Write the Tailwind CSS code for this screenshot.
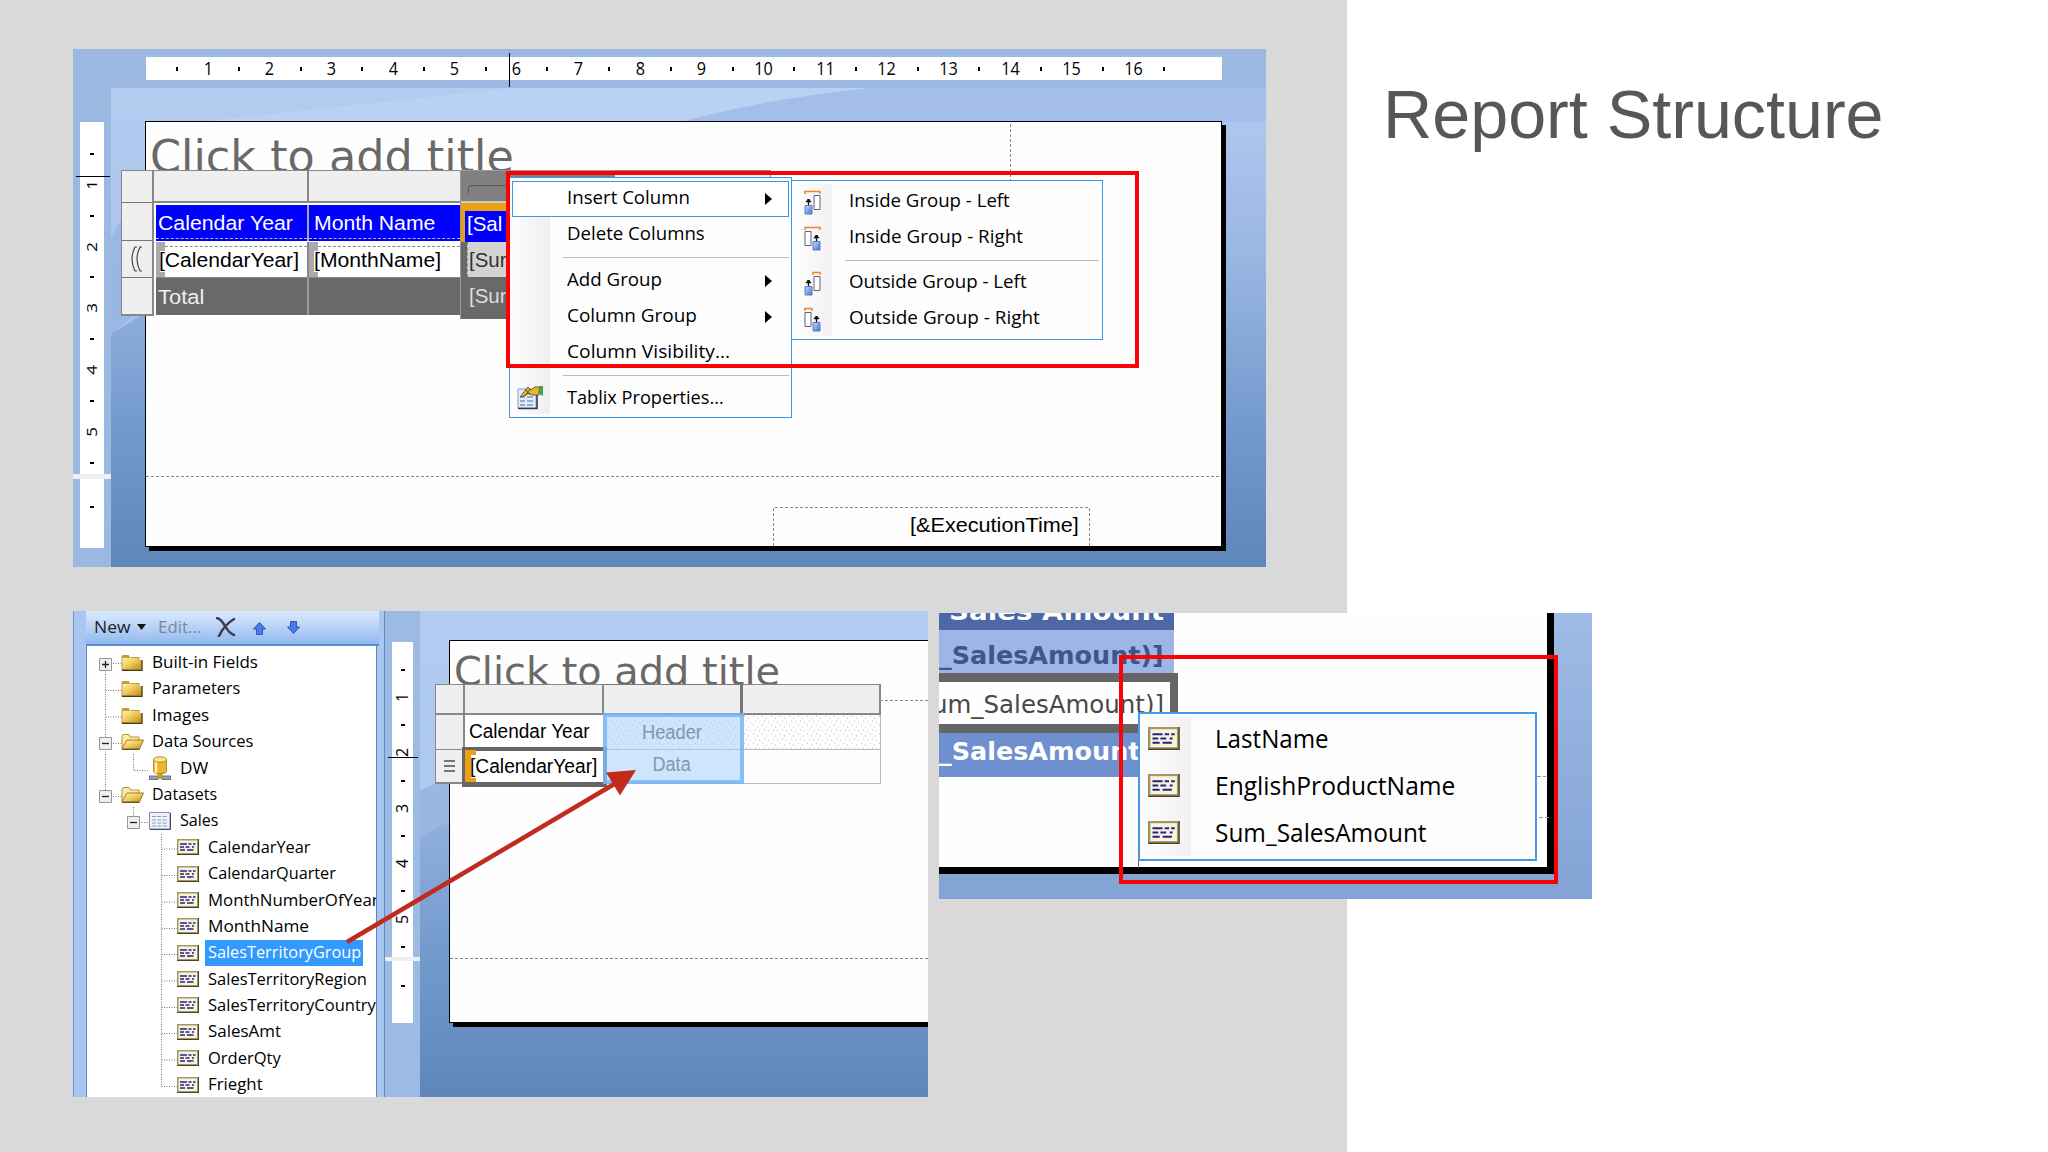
<!DOCTYPE html>
<html lang="en">
<head>
<meta charset="utf-8">
<title>Report Structure</title>
<script src="https://cdn.jsdelivr.net/npm/@tailwindcss/browser@4"></script>
</head>
<body class="relative w-[2048px] h-[1152px] overflow-hidden bg-white font-['Open_Sans','Noto_Sans',sans-serif] text-black">
<!-- shared symbols -->
<svg class="absolute w-0 h-0">
  <defs>
    <linearGradient id="gold" x1="0" y1="0" x2="1" y2="1"><stop offset="0" stop-color="#fff6c4"/><stop offset=".5" stop-color="#f0cc5c"/><stop offset="1" stop-color="#c08e1c"/></linearGradient>
    <linearGradient id="blu" x1="0" y1="0" x2="1" y2="1"><stop offset="0" stop-color="#c5d9fa"/><stop offset="1" stop-color="#4a72c8"/></linearGradient>
    <linearGradient id="sky" x1="0" y1="0" x2="0" y2="1"><stop offset="0" stop-color="#b2cbf0"/><stop offset=".35" stop-color="#9ab6e3"/><stop offset=".72" stop-color="#7199cb"/><stop offset="1" stop-color="#5f86b9"/></linearGradient>
    <symbol id="closed" viewBox="0 0 22 17"><path d="M.5 16V3l1-2h6l1.500 2H18.500V6H21v10.500H.5Z" fill="#c49a3a"/><path d="M1.500 15V4h6.500l1.500-1.500h0l.5 1.500h7.500V6H20v9Z" fill="url(#gold)"/><path d="M21 6v10.500H1" fill="none" stroke="#4a3c10" stroke-width="1.300"/></symbol>
    <symbol id="open" viewBox="0 0 23 17"><path d="M1 15V3l1-1.500h6L9.500 4H18v3" fill="#fbe9a6" stroke="#b89238"/><path d="M1 15.500 6 7h16.500l-4 9H1Z" fill="url(#gold)" stroke="#a67d22"/><path d="M1 16.300h17.500" stroke="#4a3c10"/></symbol>
    <symbol id="field" viewBox="0 0 22 16"><path d="M0 0h22v16H0z" fill="#4a4424"/><path d="M0 0h21v15H0z" fill="#a09868"/><path d="M1.500 1.500h18.500v12.500H1.500z" fill="#f8f4dc"/><path d="M3 5h7M11.500 5h3M16 5h2.500M3 8h4M8.500 8h4M15 8h2M3 11h5M10 11h6.500" stroke="#22208c" stroke-width="1.400"/></symbol>
    <symbol id="plus" viewBox="0 0 13 13"><path d="M.5.5h12v12H.5z" fill="#efefef" stroke="#969696"/><path d="M3 6.500h7M6.500 3v7" stroke="#222" stroke-width="1.300"/></symbol>
    <symbol id="minus" viewBox="0 0 13 13"><path d="M.5.5h12v12H.5z" fill="#efefef" stroke="#969696"/><path d="M3 6.500h7" stroke="#222" stroke-width="1.300"/></symbol>
    <symbol id="db" viewBox="0 0 22 24"><path d="M0 20h9v3.500H0zM13 20h9v3.500h-9z" fill="#8fa6ba" stroke="#4c5c6a" stroke-width=".8"/><path d="M8.500 17h5v6h-5z" fill="#c89c2a"/><path d="M4.500 3.500v12c0 3 13 3 13 0v-12Z" fill="#e8b730" stroke="#a87c14" stroke-width=".8"/><path d="M7 5v12" stroke="#fff0a0" stroke-width="2.500"/><ellipse cx="11" cy="3.500" rx="6.500" ry="2.800" fill="#fbe48a" stroke="#a87c14" stroke-width=".8"/></symbol>
    <symbol id="grid" viewBox="0 0 22 18"><path d="M.5.5h20.500v16.500H.5z" fill="#eef4fd" stroke="#7e8fae"/><path d="M21.500 1v16.500H1" fill="none" stroke="#3b4a68"/><path d="M3 4.500h16M3 8h16M3 11h16M3 14h16" stroke="#8c9ab6" stroke-dasharray="4 1.300"/></symbol>
    <symbol id="colL" viewBox="0 0 17 25"><path d="M10 5.500h6v14h-6z" fill="#fff" stroke="#59637a"/><path d="M4.500 17V9M1.800 11.500h5.400M3 10h3" stroke="#111" stroke-width="1.300"/><path d="M1 15.500h7v8.500H1z" fill="url(#blu)" stroke="#5f7fc0"/></symbol>
    <symbol id="colR" viewBox="0 0 17 25"><path d="M1 5.500h6v14H1z" fill="#fff" stroke="#59637a"/><path d="M12.500 17V9M9.800 11.500h5.400M11 10h3" stroke="#111" stroke-width="1.300"/><path d="M9 15.500h7v8.500H9z" fill="url(#blu)" stroke="#5f7fc0"/></symbol>
    <pattern id="dots" width="9" height="9" patternUnits="userSpaceOnUse"><path d="M1 1h1M5 3h1M3 6h1M7 7h1" stroke="#b9b4c2"/></pattern>
  </defs>
</svg>

<main class="flex w-full h-full">
  <section class="w-[1347px] h-full bg-[#d9d9d9]"></section>
  <section class="flex-1 pt-[76px] pl-[36px]">
    <h1 class="text-[68.500px] leading-[78px] text-[#575757] font-['Liberation_Sans',sans-serif]"><span data-w="501" class="inline-block origin-left whitespace-nowrap">Report Structure</span></h1>
  </section>
</main>

<!-- report designer with column context menu -->
<section class="absolute left-[73px] top-[49px] w-[1193px] h-[518px] overflow-hidden bg-[#9bb8e1]">
  <svg class="absolute left-[38px] top-[39px]" width="1155" height="479" viewBox="0 0 1155 479">
    <path d="M0 0h1155v479H0z" fill="url(#sky)"/>
    <path d="M0 0h760Q660 10 570 34H0Z" fill="#b9d1f2"/>
    <path d="M0 0h400L34 40V225L0 246Z" fill="#b0c9ef" opacity=".75"/>
    <path d="M0 150Q20 110 36 100V216L0 246Z" fill="#8fafe0" opacity=".6"/>
    <path d="M760 0h395v34H570Q660 10 760 0Z" fill="#a3bee8"/>
  </svg>
  <div data-ruler="h" class="absolute left-[73px] top-[8px] w-[1076px] h-[23px] pl-[15.900px] flex items-center bg-white"></div>
  <div data-ruler="v1" class="absolute left-[7px] top-[73px] w-[24px] h-[426px] pt-[16.600px] flex flex-col items-center bg-white"></div>
  <div class="absolute left-0 top-[425px] w-[38px] h-[5px] bg-[#efefef]"></div>
  <div class="absolute left-[436px] top-[4px] w-px h-[34px] bg-black"></div>
  <div class="absolute left-[3px] top-[127px] w-[34px] h-px bg-black"></div>

  <div class="absolute left-[72px] top-[72px] w-[1077px] h-[426px] border border-black bg-[#fefefe] shadow-[4px_4px_0_#000]">
    <div class="pl-[4px] pt-[8px] text-[44px] leading-[54px] text-[#696969] font-['DejaVu_Sans',sans-serif]"><span data-w="364" class="inline-block origin-left whitespace-nowrap">Click to add title</span></div>
    <svg class="absolute left-0 top-0" width="1075" height="424"><path d="M864.500 2v60M0 354.500h1075" stroke="#888" stroke-dasharray="3 2"/><path d="M627.500 424v-38.500h316V424" fill="none" stroke="#888" stroke-dasharray="3 2"/></svg>
    <div class="absolute left-[628px] top-[386px] w-[315px] h-[36px] flex items-center justify-end pr-[10px] pb-[2px] text-[21px] font-['Liberation_Sans',sans-serif]"><span data-w="169" class="inline-block origin-right whitespace-nowrap">[&amp;ExecutionTime]</span></div>
  </div>

  <!-- tablix -->
  <div class="absolute left-[48px] top-[121px] flex font-['Liberation_Sans',sans-serif] text-[20.500px] leading-[24px]">
    <div class="w-[33px] h-[146px] bg-[#f0efef] border border-[#888] grid grid-rows-[32px_38px_37px_1fr] divide-y divide-[#777] border-r-2 border-b-2">
      <div></div><div></div>
      <div class="flex items-center justify-center"><svg width="12" height="28" viewBox="0 0 12 28" fill="none" stroke="#444" stroke-width="1.200"><path d="M6 2H4Q1 8 1 14t3 12h2M11 2H9Q6 8 6 14t3 12h2"/></svg></div>
      <div></div>
    </div>
    <div class="w-[306px] h-[146px] bg-white grid grid-cols-[155px_151px] grid-rows-[33px_38px_37px_37px]">
      <div class="bg-[#f0efef] border-t border-b-2 border-r-2 border-[#888]"></div>
      <div class="bg-[#f0efef] border-t border-b-2 border-[#888]"></div>
      <div class="ml-[2px] mt-[2px] pl-[2px] flex items-center bg-[#00f] text-white border-r-2 border-[#aaa] relative"><span data-w="135" class="inline-block origin-left whitespace-nowrap">Calendar Year</span><i class="absolute left-0 right-0 bottom-[2px] border-b border-dashed border-[#bbb]"></i></div>
      <div class="mt-[2px] pl-[5px] flex items-center bg-[#00f] text-white relative"><span data-w="121" class="inline-block origin-left whitespace-nowrap">Month Name</span><i class="absolute left-0 right-0 bottom-[2px] border-b border-dashed border-[#bbb]"></i></div>
      <div class="ml-[2px] mt-px pl-[3px] flex items-center border-r-2 border-b border-[#888] relative bg-white"><i class="absolute left-0 top-0 bottom-0 w-[9px] bg-[#aaa]"></i><i class="absolute left-[4px] top-[9px] bottom-[5px] w-[5px] bg-white"></i><span data-w="140" class="relative inline-block origin-left whitespace-nowrap">[CalendarYear]</span><i class="absolute left-[9px] right-0 top-[4px] border-b border-dashed border-[#888]"></i></div>
      <div class="mt-px pl-[5px] flex items-center border-b border-[#888] relative bg-white"><i class="absolute left-0 top-0 bottom-0 w-[9px] bg-[#aaa]"></i><i class="absolute left-[5px] top-[9px] bottom-[5px] w-[5px] bg-white"></i><span data-w="127" class="relative inline-block origin-left whitespace-nowrap">[MonthName]</span><i class="absolute left-[9px] right-0 top-[4px] border-b border-dashed border-[#888]"></i></div>
      <div class="ml-[2px] pl-[2px] flex items-center bg-[#696969] text-[#eee] border-r-2 border-[#999]"><span data-w="46" class="inline-block origin-left whitespace-nowrap">Total</span></div>
      <div class="bg-[#696969]"></div>
    </div>
    <div class="w-[155px] h-[149px] bg-[#696969] border-l border-t border-[#999] relative">
      <div class="h-[32px] bg-[#808080] border-b-2 border-[#ccc] pt-[14px] pl-[7px]"><div class="h-[8px] border-t border-l border-[#555] rounded-tl-[4px]"></div></div>
      <div class="h-[39px] bg-[#00f] border-t-8 border-l-4 border-[#eaa010] pl-[2px] pb-[6px] text-white flex items-center"><span class="whitespace-nowrap">[Sal</span></div>
      <div class="ml-[6px] h-[35px] bg-[#d3d3d3] pl-px text-[#333] flex items-center border-l border-dashed border-[#888]"><span class="whitespace-nowrap">[Sur</span></div>
      <div class="h-[37px] pl-[8px] text-[#ddd] flex items-center"><span class="whitespace-nowrap">[Sur</span></div>
    </div>
    <div class="w-[156px] h-[8px] border-t border-r border-[#888] bg-[#f0efef]"></div>
  </div>

  <!-- context menu -->
  <div class="absolute left-[436px] top-[128px] w-[283px] h-[241px] border border-[#3b97ec] bg-[#fdfdfe] p-[2px] pt-[3px] text-[18.500px]">
    <div class="absolute left-[2px] top-[38px] bottom-[3px] w-[38px] bg-linear-to-r from-[#fdfdfe] to-[#efeff1]"></div>
    <div data-menu="1" class="relative"></div>
    <svg class="absolute left-[6px] top-[207px]" width="28" height="26" viewBox="0 0 28 26"><path d="M2 4h18v19H2z" fill="#e3ecfb" stroke="#8aa0c8"/><path d="M2 23.500h19V5" fill="none" stroke="#2c3d5c" stroke-width="1.600"/><path d="M4 12h5M4 16h5M4 20h5M11 12h6M11 16h6M11 20h6" stroke="#7f95bd" stroke-width="1.500"/><path d="M4 12 12 2l3 3 4-3h5l2 3-3 5h-7l-3-2-5 3Z" fill="#e4b92e" stroke="#6c5a20"/><path d="M23 1h4v10l-5-3Z" fill="#4da04a"/><path d="m9 4 5 6M14 4l-5 7" stroke="#5f5420"/></svg>
  </div>
  <div class="absolute left-[718px] top-[131px] w-[312px] h-[160px] border border-[#3b97ec] bg-[#fdfdfe] p-[3px] text-[18.500px]">
    <div class="absolute left-[2px] top-[3px] bottom-[3px] w-[38px] bg-linear-to-r from-[#fdfdfe] to-[#f2f2f4]"></div>
    <div data-menu="2" class="relative"></div>
  </div>
  <div class="absolute left-[433px] top-[122px] w-[633px] h-[197px] border-4 border-[#fb0207]"></div>
</section>

<!-- report data pane and designer -->
<section class="absolute left-[73px] top-[611px] w-[855px] h-[486px] overflow-hidden flex bg-[#9bbbe5]">
  <div class="w-[312px] h-full flex border-l border-[#6d96d2] bg-[#a9c6f3] pl-[12px] pr-[5px] border-r border-r-[#5f8bc9]">
    <div class="w-[293px] h-full flex flex-col">
      <div class="h-[35px] shrink-0 border-b-2 border-[#5c8dd8] bg-linear-to-b from-[#dcebfd] to-[#92b8ef] flex items-center pl-[8px] pb-px text-[16.500px] text-[#222] relative">
        <span class="w-[43px] whitespace-nowrap"><span data-w="36" class="inline-block origin-left">New</span></span>
        <svg width="9" height="6"><path d="M0 0h9L4.500 6Z" fill="#111"/></svg>
        <span class="ml-[12px] w-[58px] whitespace-nowrap text-[#7c8799]"><span data-w="43" class="inline-block origin-left">Edit...</span></span>
        <svg width="20" height="20" viewBox="0 0 20 20"><path d="M1 1q4 1 8 8t9 9M18 2Q8 8 3 19" fill="none" stroke="#3b3f4a" stroke-width="2.500" stroke-linecap="round"/></svg>
        <svg class="ml-[17px] mt-[2px]" width="13" height="13"><path d="M6.500.5 12.500 7h-3v5.500h-6V7h-3Z" fill="#4a7be8" stroke="#3157b4"/></svg>
        <svg class="ml-[21px] mt-[1px]" width="13" height="13"><path d="M6.500 12.500 12.500 6h-3V.5h-6V6h-3Z" fill="#4a7be8" stroke="#3157b4"/></svg>
      </div>
      <div class="flex-1 mr-[2px] bg-white border-x border-[#5c86c4] relative overflow-hidden pt-[3.200px]">
        <svg class="absolute left-0 top-0" width="100" height="450" fill="none" stroke="#777" stroke-dasharray="1 1.500"><path d="M18.500 18v133M18.500 17.500h16M18.500 44.500h16M18.500 71h16M18.500 97.500h16M18.500 150.500h16M46.500 108v16.500h16M46.500 161v16M47 176.500h16M74.500 188v253M74.500 203h16M74.500 229.500h16M74.500 256h16M74.500 282.500h16M74.500 308.500h16M74.500 335h16M74.500 361.500h16M74.500 387.500h16M74.500 414h16M74.500 440.500h16"/></svg>
        <div data-tree class="relative text-[16.500px]"></div>
      </div>
    </div>
  </div>
  <div class="w-[35px] h-full relative">
    <div data-ruler="v2" class="absolute left-[7px] top-[31px] w-[21px] h-[381px] pt-[14px] flex flex-col items-center bg-white"></div>
    <div class="absolute left-0 top-[346px] w-[35px] h-[4px] bg-[#efefef]"></div>
    <div class="absolute left-[3px] top-[146px] w-[30px] h-px bg-black"></div>
  </div>
  <div class="flex-1 h-full relative overflow-hidden">
    <svg class="absolute left-0 top-0" width="508" height="486"><path d="M0 0h508v486H0z" fill="url(#sky)"/><path d="M0 0h508v30H29v140L0 190Z" fill="#b3cdf1" opacity=".8"/><path d="M0 180 30 165V210L0 226Z" fill="#9ab6e2"/></svg>
    <div class="absolute left-[29px] top-[29px] w-[520px] h-[383px] border border-black bg-[#fefefe] shadow-[4px_4px_0_#000]">
      <div class="pl-[4px] pt-[6px] text-[39.500px] leading-[48px] text-[#696969] font-['DejaVu_Sans',sans-serif]"><span data-w="326" class="inline-block origin-left whitespace-nowrap">Click to add title</span></div>
      <svg class="absolute left-0 top-0" width="518" height="381"><path d="M430 59.500h88M0 317.500h518" stroke="#888" stroke-dasharray="3 2"/></svg>
    </div>
    <div class="absolute left-[15px] top-[73px] w-[446px] h-[100px] grid grid-cols-[30px_139px_139px_138px] grid-rows-[31px_35px_34px] font-['Liberation_Sans',sans-serif] text-[19.500px] leading-[24px]">
      <div class="bg-[#f0efef] border border-r-2 border-b-2 border-[#888]"></div>
      <div class="bg-[#f0efef] border-t border-b-2 border-r-2 border-[#888]"></div>
      <div class="bg-[#f0efef] border-t border-b-2 border-r-3 border-[#777]"></div>
      <div class="bg-[#f0efef] border-t border-b-2 border-r-2 border-[#888]"></div>
      <div class="bg-[#f0efef] border-l border-r-2 border-b border-[#888]"></div>
      <div class="bg-white flex items-center pl-[4px] pb-[4px] pt-px"><span data-w="121" class="inline-block origin-left whitespace-nowrap">Calendar Year</span></div>
      <div class="border-b border-[#bbb]"><svg class="w-full h-full"><rect width="100%" height="100%" fill="url(#dots)"/></svg></div>
      <div class="border-b border-r border-[#bbb]"><svg class="w-full h-full"><rect width="100%" height="100%" fill="url(#dots)"/></svg></div>
      <div class="bg-[#f0efef] border-l border-r-2 border-b-2 border-[#888] flex items-center justify-center"><i class="w-[11px] h-[12px] border-y-2 border-[#777] flex flex-col justify-center"><b class="h-[2px] bg-[#777]"></b></i></div>
      <div></div>
      <div class="border-b border-[#bbb]"></div>
      <div class="border-b border-r border-[#bbb]"></div>
    </div>
    <div class="absolute left-[42px] top-[136px] w-[145px] h-[40px] border-4 border-b-5 border-[#666] bg-white flex items-center pl-[4px] font-['Liberation_Sans',sans-serif] text-[19.500px] leading-[24px] pb-px">
      <i class="absolute left-[-1px] top-[-1px] bottom-0 w-[11px] bg-[#eaa010]"></i><i class="absolute left-[5px] top-[4px] bottom-[4px] w-[5px] bg-white"></i>
      <span data-w="127" class="relative inline-block origin-left whitespace-nowrap">[CalendarYear]</span>
    </div>
    <div class="absolute left-[183px] top-[102px] w-[141px] h-[71px] border-4 border-[#6fb0f5]/75 bg-[#a5cffd]/55 grid grid-rows-[31px_32px] justify-items-center items-center font-['Liberation_Sans',sans-serif] text-[19.500px] leading-[24px] text-[#8795aa] pr-[4px]">
      <span data-w="60" class="inline-block whitespace-nowrap pb-[2px]">Header</span>
      <span data-w="38" class="inline-block whitespace-nowrap">Data</span>
    </div>
  </div>
  <svg class="absolute left-0 top-0" width="855" height="486"><path d="M274 331 543 172" stroke="#c02b1f" stroke-width="4.500"/><path d="M563 159 533 161.500 547 184.500Z" fill="#c42a1c"/></svg>
</section>

<!-- field picker -->
<section class="absolute left-[939px] top-[613px] w-[653px] h-[286px] overflow-hidden bg-linear-to-b from-[#9fbbe7] to-[#82a3d3]">
  <div class="w-[615px] h-[261px] bg-[#fefefe] border-r-[7px] border-b-[7px] border-black font-['DejaVu_Sans',sans-serif] text-[25px] leading-[30px]">
    <div class="w-[235px] h-[18px] bg-[#4c68a7] border-b border-[#9fb5dc] text-white font-bold overflow-hidden flex items-end pl-[10px] pb-[3px]"><span data-w="215" class="inline-block origin-left whitespace-nowrap">Sales Amount</span></div>
    <div class="w-[235px] h-[42px] bg-[#9db6e5] text-[#3f568c] font-bold flex items-center pt-[8px]"><span data-w="225" class="inline-block origin-left whitespace-nowrap">_SalesAmount)]</span></div>
    <div class="w-[239px] h-[60px] bg-[#fefefe] border-t-[9px] border-b-[9px] border-r-[8px] border-[#666] text-[#484848] flex items-center overflow-hidden pt-[3px]"><span data-w="232" class="ml-[-7px] inline-block origin-left whitespace-nowrap">um_SalesAmount)]</span></div>
    <div class="w-[235px] h-[44px] bg-[#6f90ce] text-white font-bold flex items-center pb-[6px]"><span data-w="225" class="inline-block origin-left whitespace-nowrap">_SalesAmount)]</span></div>
  </div>
  <svg class="absolute left-0 top-0" width="653" height="286"><path d="M598 163.500h9M600 204.500h12" stroke="#999" stroke-dasharray="4 2"/><path d="M199.500 247v8" stroke="#666"/></svg>
  <div class="absolute left-[199px] top-[99px] w-[399px] h-[149px] border-2 border-[#4798e6] bg-[#fdfdfe] text-[25px] flex flex-col pt-[1px]">
    <div class="absolute left-px top-[3px] bottom-[3px] w-[50px] bg-linear-to-r from-[#fdfdfe] to-[#f1f1f3]"></div>
    <div class="relative h-[47px] flex items-center pl-[8px]"><svg class="w-[32px] h-[23px]"><use href="#field"/></svg><span data-w="114" class="ml-[35px] inline-block origin-left whitespace-nowrap">LastName</span></div>
    <div class="relative h-[47px] flex items-center pl-[8px]"><svg class="w-[32px] h-[23px]"><use href="#field"/></svg><span data-w="240" class="ml-[35px] inline-block origin-left whitespace-nowrap">EnglishProductName</span></div>
    <div class="relative h-[47px] flex items-center pl-[8px]"><svg class="w-[32px] h-[23px]"><use href="#field"/></svg><span data-w="212" class="ml-[35px] inline-block origin-left whitespace-nowrap">Sum_SalesAmount</span></div>
  </div>
</section>
<div class="absolute left-[1119px] top-[655px] w-[439px] h-[229px] border-4 border-[#fb0207]"></div>

<script>
const $ = s => document.querySelector(s);
const dot = '<i class="w-[2px] h-[4px] bg-black"></i>';
// rulers: a tick dot, then a number, repeated
let h = '';
for (let n = 1; n <= 16; n++) h += `<div class="w-[30.850px] shrink-0 flex justify-center">${dot}</div><div class="w-[30.850px] shrink-0 text-center text-[18px] leading-[23px] scale-x-90">${n}</div>`;
$('[data-ruler=h]').innerHTML = h + `<div class="w-[30.850px] shrink-0 flex justify-center">${dot}</div>`;
const vdot = '<i class="w-[4px] h-[2px] bg-black"></i>';
let v1 = '', v2 = '';
for (let n = 1; n <= 5; n++) {
  v1 += `<div class="h-[30.870px] shrink-0 flex items-center">${vdot}</div><div class="h-[30.870px] shrink-0 flex items-center"><span class="block -rotate-90 text-[17px] leading-[24px] scale-y-90">${n}</span></div>`;
  v2 += `<div class="h-[27.700px] shrink-0 flex items-center">${vdot}</div><div class="h-[27.700px] shrink-0 flex items-center"><span class="block -rotate-90 text-[16px] leading-[21px]">${n}</span></div>`;
}
$('[data-ruler=v1]').innerHTML = v1 + `<div class="h-[30.870px] shrink-0 flex items-center">${vdot}</div><div class="h-[57px] shrink-0 flex items-center">${vdot}</div>`;
$('[data-ruler=v2]').innerHTML = v2 + `<div class="h-[27.700px] shrink-0 flex items-center">${vdot}</div><div class="h-[51px] shrink-0 flex items-center">${vdot}</div>`;

// menus
const arrow = '<svg class="absolute right-[16px] top-[11px]" width="7" height="12"><path d="M0 0 7 6 0 12Z"/></svg>';
const txt = (t, w) => `<span data-w="${w}" class="inline-block origin-left whitespace-nowrap">${t}</span>`;
$('[data-menu="1"]').innerHTML = [
  ['Insert Column', 123, 1, 1], ['Delete Columns', 138], 0, ['Add Group', 95, 1], ['Column Group', 130, 1], ['Column Visibility...', 163], 0, ['Tablix Properties...', 157]
].map(r => !r ? '<div class="h-[10px] pl-[51px] pt-[4px]"><div class="h-px bg-[#bdbdbd]"></div></div>'
  : `<div class="relative h-[36px] flex items-center pl-[54px] pb-[5px] ${r[3] ? 'border border-[#3b97ec] bg-white' : 'border border-transparent'}">${txt(r[0], r[1])}${r[2] ? arrow : ''}</div>`).join('');
const caps = ['M1 4V1.500h15V4', 'M1 4V1.500h15V4', 'M9 4V1.500h7V4', 'M1 4V1.500h7V4'];
$('[data-menu="2"]').innerHTML = [
  ['Inside Group - Left', 161, 0], ['Inside Group - Right', 174, 1], 0, ['Outside Group - Left', 178, 2], ['Outside Group - Right', 191, 3]
].map(r => !r ? '<div class="h-[9px] pl-[50px] pt-[4px]"><div class="h-px bg-[#bdbdbd]"></div></div>'
  : `<div class="h-[36px] flex items-center pl-[9px]"><svg class="w-[17px] h-[25px]" viewBox="0 0 17 25"><path d="${caps[r[2]]}" fill="none" stroke="#ee8426" stroke-width="1.500"/><use href="${r[2] % 2 ? '#colR' : '#colL'}" width="17" height="25"/></svg><span class="ml-[28px] mb-[4px]">${txt(r[0], r[1])}</span></div>`).join('');

// report data tree: label, width, level, icon, expander
const pads = ['pl-[12px]', 'pl-[40px]', 'pl-[68px]'];
const icons = { closed: 'w-[22px] h-[17px]', open: 'w-[23px] h-[17px]', db: 'w-[22px] h-[24px]', grid: 'w-[22px] h-[18px]', field: 'w-[22px] h-[16px]' };
$('[data-tree]').innerHTML = [
  ['Built-in Fields', 106, 0, 'closed', 'plus'], ['Parameters', 88, 0, 'closed'], ['Images', 57, 0, 'closed'], ['Data Sources', 101, 0, 'open', 'minus'],
  ['DW', 28, 1, 'db'], ['Datasets', 65, 0, 'open', 'minus'], ['Sales', 39, 1, 'grid', 'minus'],
  ['CalendarYear', 103, 2, 'field'], ['CalendarQuarter', 128, 2, 'field'], ['MonthNumberOfYear', 171, 2, 'field'], ['MonthName', 101, 2, 'field'],
  ['SalesTerritoryGroup', 153, 2, 'field', 0, 1], ['SalesTerritoryRegion', 159, 2, 'field'], ['SalesTerritoryCountry', 168, 2, 'field'],
  ['SalesAmt', 73, 2, 'field'], ['OrderQty', 73, 2, 'field'], ['Frieght', 55, 2, 'field']
].map(([t, w, l, ic, ex, sel]) => `<div class="h-[26.400px] flex items-center ${pads[l]}">
  <span class="w-[13px] h-[13px] mt-[4px] shrink-0">${ex ? `<svg class="block w-[13px] h-[13px]"><use href="#${ex}"/></svg>` : ''}</span>
  <svg class="shrink-0 ml-[9px] ${icons[ic]}"><use href="#${ic}"/></svg>
  <span class="shrink-0 h-[26px] flex items-center ${ic === 'open' ? 'ml-[5px]' : 'ml-[6px]'} ${sel ? 'w-[158px] bg-[#3399ff] text-white' : ''} pl-[3px]">${txt(t, w)}</span></div>`).join('');

const fit = e => { if (e.offsetWidth) e.style.transform = `scaleX(${e.dataset.w / e.offsetWidth})`; };
const watch = new ResizeObserver(list => list.forEach(x => fit(x.target)));
const labels = document.querySelectorAll('[data-w]');
labels.forEach(e => { fit(e); watch.observe(e); });
addEventListener('load', () => labels.forEach(fit));
document.fonts.ready.then(() => labels.forEach(fit));
</script>
</body>
</html>
